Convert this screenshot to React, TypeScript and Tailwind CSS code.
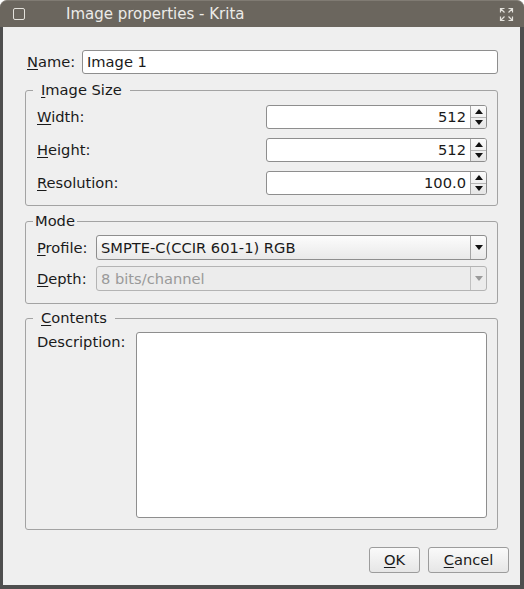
import React from "react";

const font = { fontFamily: '"DejaVu Sans", "Liberation Sans", sans-serif' };

function Mn({ text }: { text: string }) {
  // first letter underlined, like a Qt mnemonic
  return (
    <span>
      <span className="underline underline-offset-[2px]">{text[0]}</span>
      {text.slice(1)}
    </span>
  );
}

function Arrow({ up, color = "#111" }: { up?: boolean; color?: string }) {
  return (
    <svg width="8" height="5" viewBox="0 0 8 5">
      {up ? <polygon points="0,5 8,5 4,0" fill={color} /> : <polygon points="0,0 8,0 4,5" fill={color} />}
    </svg>
  );
}

function SpinBox({ value }: { value: string }) {
  return (
    <div className="flex h-[24px] w-[221px] rounded-[3px] border border-[#8e8e8e] bg-white overflow-hidden">
      <div className="flex-1 flex items-center justify-end pr-[4px] text-[#1a1a1a]">{value}</div>
      <div className="w-[16px] flex flex-col border-l border-[#a5a5a5] bg-gradient-to-b from-[#fbfbfb] to-[#e6e6e6]">
        <div className="flex-1 flex items-center justify-center border-b border-[#b5b5b5]">
          <Arrow up />
        </div>
        <div className="flex-1 flex items-center justify-center">
          <Arrow />
        </div>
      </div>
    </div>
  );
}

function Combo({ value, disabled }: { value: string; disabled?: boolean }) {
  return (
    <div
      className={
        disabled
          ? "flex flex-1 h-[25px] rounded-[3px] border border-[#b4b4b4] bg-[#ececec] text-[#9a9a9a]"
          : "flex flex-1 h-[25px] rounded-[3px] border border-[#8e8e8e] bg-gradient-to-b from-[#fcfcfc] to-[#e9e9e9] text-[#1a1a1a]"
      }
    >
      <div className="flex-1 flex items-center pl-[4px]">{value}</div>
      <div className={"w-[16px] flex items-center justify-center border-l " + (disabled ? "border-[#c0c0c0]" : "border-[#a5a5a5]")}>
        <Arrow color={disabled ? "#9a9a9a" : "#111"} />
      </div>
    </div>
  );
}

function Button({ children, w }: { children: React.ReactNode; w: string }) {
  return (
    <div className={"h-[26px] flex items-center justify-center rounded-[3px] border border-[#9c9c9c] bg-gradient-to-b from-[#fafafa] to-[#e6e6e6] text-[#1a1a1a] " + w}>
      {children}
    </div>
  );
}

export default function App() {
  return (
    <div className="w-[524px] h-[589px] flex flex-col bg-white text-[14.67px] leading-[18px]" style={font}>
      {/* title bar */}
      <div className="h-[27px] rounded-t-[7px] bg-[#6b665e] flex items-center border-t border-[#807b73]">
        <div className="ml-[13px] w-[12px] h-[12px] rounded-[2px] border border-[#e4e2dc]" />
        <div className="ml-[41px] text-[15px] text-[#ecebe8]">Image properties - Krita</div>
        <div className="ml-auto mr-[10px]">
          <svg width="15" height="15" viewBox="0 0 15 15" fill="none" stroke="#e4e2dc" strokeWidth="1.2">
            <path d="M1.5 5.5 V1.5 H5.5 M1.5 1.5 L5.5 5.5" />
            <path d="M9.5 1.5 H13.5 V5.5 M13.5 1.5 L9.5 5.5" />
            <path d="M1.5 9.5 V13.5 H5.5 M1.5 13.5 L5.5 9.5" />
            <path d="M13.5 9.5 V13.5 H9.5 M13.5 13.5 L9.5 9.5" />
          </svg>
        </div>
      </div>

      {/* body */}
      <div className="flex-1 flex flex-col bg-[#efefef] border-l-[3px] border-r-[4px] border-b-[4px] border-[#4e4e4e] text-[#1a1a1a]">
        <div className="px-[22px] pt-[23px] flex flex-col">
          <div className="flex items-center pl-[2px]">
            <div className="w-[55px]"><Mn text="Name:" /></div>
            <div className="flex-1 h-[24px] rounded-[3px] border border-[#8e8e8e] bg-white flex items-center pl-[4px]">Image 1</div>
          </div>

          <fieldset className="mt-[7px] border border-[#a3a3a3] rounded-[3px] px-0 pb-[10px]">
            <legend className="ml-[7px] px-[8px] h-[18px]"><Mn text="Image Size" /></legend>
            <div className="flex flex-col gap-[9px] pl-[11px] pr-[10px] pt-[6px]">
              <div className="flex items-center">
                <div className="flex-1"><Mn text="Width:" /></div>
                <SpinBox value="512" />
              </div>
              <div className="flex items-center">
                <div className="flex-1"><Mn text="Height:" /></div>
                <SpinBox value="512" />
              </div>
              <div className="flex items-center">
                <div className="flex-1"><Mn text="Resolution:" /></div>
                <SpinBox value="100.0" />
              </div>
            </div>
          </fieldset>

          <fieldset className="mt-[6px] border border-[#a3a3a3] rounded-[3px] px-0 pb-[12px]">
            <legend className="ml-[7px] px-[2px] h-[18px]">Mode</legend>
            <div className="flex flex-col gap-[6px] pl-[11px] pr-[10px] pt-[5px]">
              <div className="flex items-center">
                <div className="w-[59px]"><Mn text="Profile:" /></div>
                <Combo value="SMPTE-C(CCIR 601-1) RGB" />
              </div>
              <div className="flex items-center">
                <div className="w-[59px]"><Mn text="Depth:" /></div>
                <Combo value="8 bits/channel" disabled />
              </div>
            </div>
          </fieldset>

          <fieldset className="mt-[5px] border border-[#a3a3a3] rounded-[3px] px-0 pb-[11px]">
            <legend className="ml-[7px] px-[8px] h-[18px]"><Mn text="Contents" /></legend>
            <div className="flex pl-[11px] pr-[10px] pt-[5px]">
              <div className="w-[99px] pt-[1px]">Description:</div>
              <div className="flex-1 h-[186px] rounded-[3px] border border-[#8e8e8e] bg-white" />
            </div>
          </fieldset>
        </div>

        <div className="flex justify-end gap-[8px] pr-[11px] mt-[17px]">
          <Button w="w-[51px]"><Mn text="OK" /></Button>
          <Button w="w-[81px]"><Mn text="Cancel" /></Button>
        </div>
      </div>
    </div>
  );
}
